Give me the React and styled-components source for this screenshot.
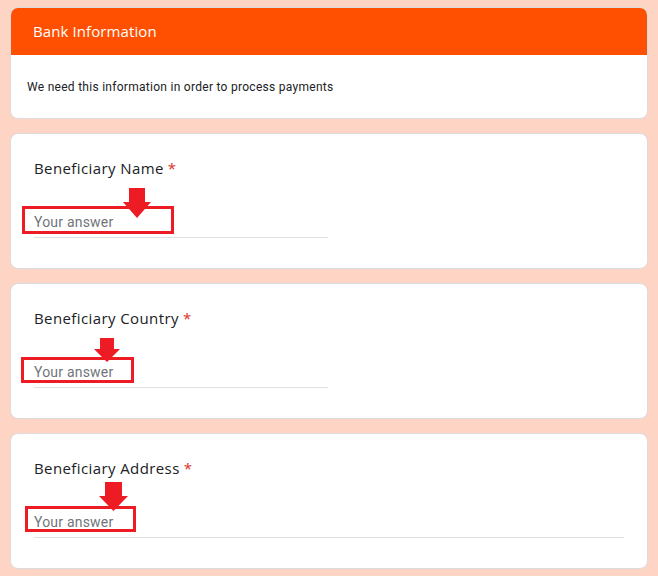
import React from "react";
import styled, { createGlobalStyle } from "styled-components";

const Global = createGlobalStyle`
  html, body { margin: 0; padding: 0; background: #fed4c4; }
  body { font-family: Roboto, "Liberation Sans", Arial, sans-serif; }
  * { box-sizing: border-box; }
`;

const Page = styled.div`
  width: 658px;
  min-height: 576px;
  background: #fed4c4;
  padding: 7px 10px 10px 10px;
  display: flex;
  flex-direction: column;
  gap: 14px;
`;

const Card = styled.section`
  background: #fff;
  border: 1px solid #dadce0;
  border-radius: 8px;
  overflow: hidden;
`;

const HeaderBar = styled.div`
  background: #ff4f00;
  height: 48px;
  margin: -1px -1px 0 -1px;
  padding: 0 0 0 23px;
  display: flex;
  align-items: center;
  color: #fff;
  font-family: "Open Sans", Lato, sans-serif;
  font-size: 15px;
  font-weight: 500;
  letter-spacing: 0.1px;
`;

const Description = styled.p`
  margin: 0;
  padding: 24px 16px 22px 16px;
  font-family: Roboto, sans-serif;
  font-size: 12px;
  line-height: 17px;
  letter-spacing: 0.28px;
  color: #202124;
`;

const QuestionCard = styled(Card)`
  position: relative;
  overflow: visible;
  padding: 22px 23px 30px 23px;
  display: flex;
  flex-direction: column;
`;

const Label = styled.div`
  font-family: "Open Sans", Lato, sans-serif;
  font-size: 15px;
  line-height: 24px;
  color: #202124;
  letter-spacing: 0.4px;
`;

const Star = styled.span`
  color: #d93025;
  margin-left: 4px;
`;

const Field = styled.div`
  position: relative;
  margin-top: 24px;
  width: ${(p) => (p.$wide ? "590px" : "294px")};
  height: 34px;
  border-bottom: 1px solid #e0e0e0;
  display: flex;
  align-items: center;
  font-family: Roboto, sans-serif;
  font-size: 14px;
  letter-spacing: 0.2px;
  color: #70757a;
  padding-top: 3px;
`;

const Highlight = styled.div`
  position: absolute;
  border: 3px solid #ed1c24;
`;

const ArrowSvg = styled.svg`
  position: absolute;
  display: block;
`;

function Arrow({ left, top, w, h }) {
  const shaft = Math.round(w * 0.22);
  const headY = Math.round(h * 0.47);
  const pts = [
    [shaft, 0],
    [w - shaft, 0],
    [w - shaft, headY],
    [w, headY],
    [w / 2, h],
    [0, headY],
    [shaft, headY],
  ]
    .map((p) => p.join(","))
    .join(" ");
  return (
    <ArrowSvg
      width={w}
      height={h}
      viewBox={`0 0 ${w} ${h}`}
      style={{ left, top }}
    >
      <polygon points={pts} fill="#ed1c24" />
    </ArrowSvg>
  );
}

const questions = [
  {
    label: "Beneficiary Name",
    box: { left: -12, top: 2, width: 152, height: 28 },
    arrow: { left: 89, top: -16, w: 28, h: 30 },
  },
  {
    label: "Beneficiary Country",
    box: { left: -13, top: 3, width: 113, height: 26 },
    arrow: { left: 60, top: -16, w: 26, h: 24 },
  },
  {
    label: "Beneficiary Address",
    wide: true,
    box: { left: -9, top: 2, width: 111, height: 26 },
    arrow: { left: 65, top: -22, w: 29, h: 29 },
  },
];

export default function App() {
  return (
    <>
      <Global />
      <Page>
        <Card>
          <HeaderBar>Bank Information</HeaderBar>
          <Description>
            We need this information in order to process payments
          </Description>
        </Card>
        {questions.map((q) => (
          <QuestionCard key={q.label}>
            <Label>
              {q.label}
              <Star>*</Star>
            </Label>
            <Field $wide={q.wide}>
              Your answer
              <Highlight style={q.box} />
              <Arrow {...q.arrow} />
            </Field>
          </QuestionCard>
        ))}
      </Page>
    </>
  );
}
